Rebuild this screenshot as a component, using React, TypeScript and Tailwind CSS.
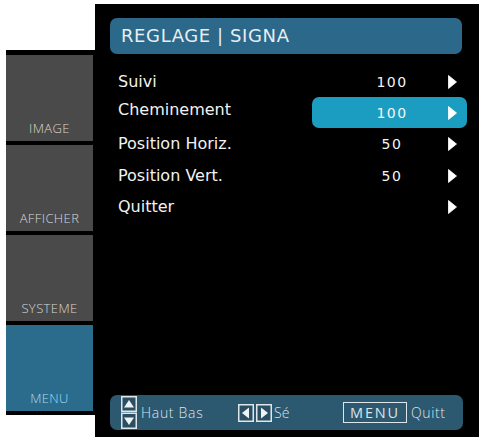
import React from "react";

const Arrow = () => (
  <svg width="9" height="14" viewBox="0 0 9 14" className="block">
    <path d="M0.5 0.5 L8.5 7 L0.5 13.5 Z" fill="#ffffff" stroke="#ffffff" strokeWidth="0.8" strokeLinejoin="round" />
  </svg>
);

const rows = [
  { label: "Suivi", value: "100", h: "h-[31px]", active: false },
  { label: "Cheminement", value: "100", h: "h-[31px]", active: true },
  { label: "Position Horiz.", value: "50", h: "h-[32px]", active: false },
  { label: "Position Vert.", value: "50", h: "h-[32px]", active: false },
  { label: "Quitter", value: "", h: "h-[30px]", active: false },
];

const tiles = [
  { label: "IMAGE", active: false },
  { label: "AFFICHER", active: false },
  { label: "SYSTEME", active: false },
  { label: "MENU", active: true },
];

const UpDown = () => (
  <svg width="16" height="33" viewBox="0 0 16 33" className="block">
    <rect x="0.75" y="0.75" width="14.5" height="14.5" fill="#2a4f63" stroke="#dfe6ea" strokeWidth="1.5" />
    <path d="M3 11.5 L8 4 L13 11.5 Z" fill="#eef2f4" />
    <rect x="0.75" y="17.25" width="14.5" height="15" fill="#2a4f63" stroke="#dfe6ea" strokeWidth="1.5" />
    <path d="M3 21.5 L13 21.5 L8 29 Z" fill="#eef2f4" />
  </svg>
);

const LeftBox = () => (
  <svg width="16" height="18" viewBox="0 0 16 18" className="block">
    <rect x="0.75" y="0.75" width="14.5" height="16.5" fill="#2a4f63" stroke="#dfe6ea" strokeWidth="1.5" />
    <path d="M11 3.5 L4 9 L11 14.5 Z" fill="#eef2f4" />
  </svg>
);

const RightBox = () => (
  <svg width="16" height="18" viewBox="0 0 16 18" className="block">
    <rect x="0.75" y="0.75" width="14.5" height="16.5" fill="#2a4f63" stroke="#dfe6ea" strokeWidth="1.5" />
    <path d="M5 3.5 L12 9 L5 14.5 Z" fill="#eef2f4" />
  </svg>
);

export default function App() {
  return (
    <div className="w-[479px] h-[437px] bg-white flex flex-row pl-[6px] overflow-hidden">
      {/* Sidebar */}
      <div className="w-[89px] h-[365px] mt-[50px] bg-black pt-[5px] flex flex-col gap-[4px]">
        {tiles.map((t) => (
          <div
            key={t.label}
            className={`w-[87px] h-[86px] flex items-end justify-center pb-[5px] ${
              t.active ? "bg-[#2b6c8c]" : "bg-[#4a4a4a]"
            }`}
          >
            <span
              className={`text-[13px] leading-[16px] tracking-[0.4px] font-light ${
                t.active ? "text-[#a9d9ef]" : "text-[#d6d6d6]"
              }`}
              style={{ fontFamily: '"Open Sans", "DejaVu Sans", sans-serif' }}
            >
              {t.label}
            </span>
          </div>
        ))}
      </div>

      {/* Main panel */}
      <div
        className="w-[384px] h-[433px] mt-[4px] bg-black flex flex-col"
        style={{ fontFamily: '"DejaVu Sans", Verdana, sans-serif' }}
      >
        <div className="mt-[14px] ml-[15px] w-[352px] h-[36px] rounded-[7px] bg-[#2b6889] flex items-center pl-[11px]">
          <span className="text-[18px] leading-[20px] tracking-[0.6px] text-[#e8eef2]">REGLAGE | SIGNA</span>
        </div>

        <div className="mt-[12px] flex flex-col">
          {rows.map((r) => (
            <div key={r.label} className={`${r.h} flex items-center pr-[12px]`}>
              <span className={`flex-1 pl-[23px] text-[16px] leading-[20px] text-[#f2f2f2] ${r.active ? "-mt-[5px]" : ""}`}>
                {r.label}
              </span>
              <div
                className={`w-[155px] h-full flex items-center rounded-[7px] ${
                  r.active ? "bg-[#1b9dc1]" : ""
                }`}
              >
                <span className="ml-[30px] w-[100px] text-center text-[14px] leading-[16px] tracking-[1.5px] text-[#f4f4f4]">
                  {r.value}
                </span>
                <span className="ml-[6px]">
                  <Arrow />
                </span>
              </div>
            </div>
          ))}
        </div>

        <div className="flex-1" />

        <div
          className="mb-[7px] ml-[15px] w-[353px] h-[35px] rounded-[7px] bg-[#2c5870] flex items-center pl-[11px] text-[#dce4e9]"
          style={{ fontFamily: '"Open Sans", "DejaVu Sans", sans-serif' }}
        >
          <div className="w-[117px] flex items-center">
            <UpDown />
            <span className="ml-[4px] text-[14px] leading-[18px] font-light tracking-[0.7px]">Haut Bas</span>
          </div>
          <div className="w-[105px] flex items-center">
            <LeftBox />
            <span className="ml-[2px]">
              <RightBox />
            </span>
            <span className="ml-[2px] text-[14px] leading-[18px] font-light">Sé</span>
          </div>
          <div className="flex items-center">
            <div className="w-[64px] h-[21px] border border-[#dfe6ea] flex items-center justify-center">
              <span className="text-[14.5px] leading-[16px] tracking-[1.8px] font-normal">MENU</span>
            </div>
            <span className="ml-[4px] text-[14px] leading-[18px] font-light tracking-[0.6px]">Quitt</span>
          </div>
        </div>
      </div>
    </div>
  );
}
